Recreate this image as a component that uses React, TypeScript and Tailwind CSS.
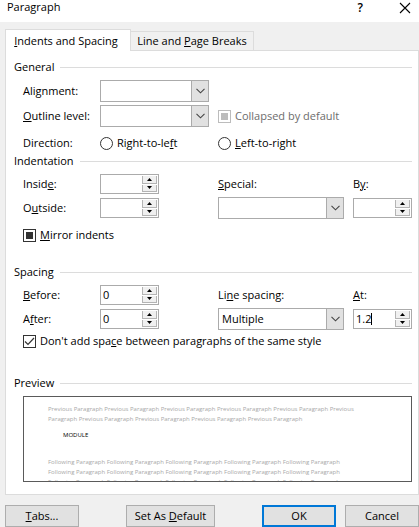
import type { ReactNode } from 'react';

function SectionHeading({ children }: { children: ReactNode }) {
  return (
    <div className="flex h-4 items-center gap-1.5 pr-1.5 pl-2">
      <h2 className="text-[11px]">{children}</h2>
      <span className="h-px flex-1 bg-[#dcdcdc]" />
    </div>
  );
}

function Combo({ id, value }: { id: string; value: string }) {
  return (
    <div className="relative h-[22px]">
      <select
        id={id}
        defaultValue={value}
        className="h-full w-full appearance-none border border-[#ababab] bg-white pr-5 pl-[3px] outline-none"
      >
        <option value={value}>{value}</option>
      </select>
      <span className="pointer-events-none absolute inset-y-0 right-0 flex w-[18px] items-center justify-center border border-[#ababab] bg-[#e1e1e1]">
        <svg width="9" height="6" viewBox="0 0 9 6" fill="none" stroke="#444" strokeWidth="1.1">
          <path d="M0.5 0.8 4.5 4.8 8.5 0.8" />
        </svg>
      </span>
    </div>
  );
}

function Spinner({ id, value = '', caret = false }: { id: string; value?: string; caret?: boolean }) {
  return (
    <div className="relative flex h-5 w-[59px] border border-[#ababab] bg-white pr-px">
      <input id={id} defaultValue={value} className="w-full min-w-0 flex-1 bg-transparent pl-0.5 outline-none" />
      {caret && <span className="absolute top-[3px] left-[17px] h-3 w-px bg-black" />}
      <div className="flex w-[15px] flex-col gap-px py-px">
        <button
          type="button"
          aria-label="Increase"
          className="flex flex-1 items-center justify-center border-x border-b border-[#b4b4b4] bg-[#f0f0f0]"
        >
          <svg width="5" height="3" viewBox="0 0 5 3">
            <path d="M2.5 0 5 3H0Z" fill="#000" />
          </svg>
        </button>
        <button
          type="button"
          aria-label="Decrease"
          className="flex flex-1 items-center justify-center border-x border-b border-[#b4b4b4] bg-[#f0f0f0]"
        >
          <svg width="5" height="3" viewBox="0 0 5 3">
            <path d="M0 0H5L2.5 3Z" fill="#000" />
          </svg>
        </button>
      </div>
    </div>
  );
}

const row = 'grid grid-cols-[77px_118px_1fr_59px] items-center pl-[17px] pr-1.5';
const tick = 'peer col-start-1 row-start-1 size-[13px] appearance-none border bg-white';
const dialogButton = 'h-[22px] border border-[#adadad] bg-[#e1e1e1] text-center';

export default function App() {
  return (
    <main className="bg-[#f0f0f0] font-['Open_Sans','Noto_Sans',sans-serif] text-[11px] leading-4 text-black">
      <header className="flex h-[22px] items-start justify-between bg-white pr-2 pl-[7px]">
        <h1 className="leading-[14px]">Paragraph</h1>
        <div className="flex gap-9">
          <button type="button" aria-label="Help" className="h-4 text-xs leading-[14px] font-semibold">
            ?
          </button>
          <button type="button" aria-label="Close">
            <svg width="12" height="12" viewBox="0 0 12 12" stroke="#000" strokeWidth="1.1">
              <path d="M1 1 11 11M11 1 1 11" />
            </svg>
          </button>
        </div>
      </header>

      <div className="pt-[7px] pl-[5px]">
        <div role="tablist" className="flex items-end">
          <button
            type="button"
            role="tab"
            aria-selected="true"
            className="z-10 -mb-px h-[22px] w-[126px] border border-b-0 border-[#dcdcdc] bg-white pr-1"
          >
            <u>I</u>ndents and Spacing
          </button>
          <button
            type="button"
            role="tab"
            aria-selected="false"
            className="h-[19px] w-[123px] border border-b-0 border-l-0 border-[#dcdcdc]"
          >
            Line and <u>P</u>age Breaks
          </button>
        </div>

        <div role="tabpanel" className="border border-[#dcdcdc] bg-white pt-2 pb-3">
          <SectionHeading>General</SectionHeading>
          <div className="mt-[5px] flex flex-col gap-[3px]">
            <div className={row}>
              <label htmlFor="alignment">
                Ali<u>g</u>nment:
              </label>
              <div className="w-[109px]">
                <Combo id="alignment" value="" />
              </div>
            </div>
            <div className={row}>
              <label htmlFor="outline">
                <u>O</u>utline level:
              </label>
              <div className="w-[109px]">
                <Combo id="outline" value="" />
              </div>
              <label className="col-span-2 flex items-center gap-1 text-[#6d6d6d]">
                <span className="grid place-items-center">
                  <input type="checkbox" disabled className={tick + ' border-[#bcbcbc]'} />
                  <span className="col-start-1 row-start-1 size-[7px] bg-[#bcbcbc]" />
                </span>
                Collapsed by default
              </label>
            </div>
          </div>
          <div className={row + ' mt-2'}>
            <span>Direction:</span>
            <label className="flex items-center gap-1">
              <input
                type="radio"
                name="direction"
                className="size-[13px] appearance-none rounded-full border border-[#333] bg-white"
              />
              <span>
                Right-to-le<u>f</u>t
              </span>
            </label>
            <label className="flex items-center gap-1">
              <input
                type="radio"
                name="direction"
                className="size-[13px] appearance-none rounded-full border border-[#333] bg-white"
              />
              <span>
                <u>L</u>eft-to-right
              </span>
            </label>
          </div>

          <div className="mt-0.5">
            <SectionHeading>Indentation</SectionHeading>
          </div>
          <div className="mt-[5px] flex flex-col gap-[3px]">
            <div className={row}>
              <label htmlFor="inside">
                Insid<u>e</u>:
              </label>
              <Spinner id="inside" />
              <label htmlFor="special">
                <u>S</u>pecial:
              </label>
              <label htmlFor="by">
                B<u>y</u>:
              </label>
            </div>
            <div className={row}>
              <label htmlFor="outside">
                O<u>u</u>tside:
              </label>
              <Spinner id="outside" />
              <div className="pr-[9px]">
                <Combo id="special" value="" />
              </div>
              <Spinner id="by" />
            </div>
          </div>
          <label className="mt-2 flex items-center gap-1 pl-[17px]">
            <span className="grid place-items-center">
              <input type="checkbox" className={tick + ' border-[#333]'} />
              <span className="col-start-1 row-start-1 size-[7px] bg-[#333]" />
            </span>
            <span>
              <u>M</u>irror indents
            </span>
          </label>

          <div className="mt-[21px]">
            <SectionHeading>Spacing</SectionHeading>
          </div>
          <div className="mt-[5px] flex flex-col gap-[3px]">
            <div className={row}>
              <label htmlFor="before">
                <u>B</u>efore:
              </label>
              <Spinner id="before" value="0" />
              <label htmlFor="line-spacing">
                Li<u>n</u>e spacing:
              </label>
              <label htmlFor="at">
                <u>A</u>t:
              </label>
            </div>
            <div className={row}>
              <label htmlFor="after">
                A<u>f</u>ter:
              </label>
              <Spinner id="after" value="0" />
              <div className="pr-[9px]">
                <Combo id="line-spacing" value="Multiple" />
              </div>
              <Spinner id="at" value="1.2" caret />
            </div>
          </div>
          <label className="mt-[3px] flex items-center gap-1 pl-[17px]">
            <span className="grid place-items-center">
              <input type="checkbox" defaultChecked className={tick + ' border-[#333]'} />
              <svg
                className="pointer-events-none col-start-1 row-start-1 hidden peer-checked:block"
                width="11"
                height="9"
                viewBox="0 0 11 9"
                fill="none"
                stroke="#333"
                strokeWidth="1.2"
              >
                <path d="M1 4.5 4 7.5 10 1" />
              </svg>
            </span>
            <span>
              Don't add spa<u>c</u>e between paragraphs of the same style
            </span>
          </label>

          <div className="mt-[26px]">
            <SectionHeading>Preview</SectionHeading>
          </div>
          <div className="mt-[5px] mr-1.5 ml-[17px] h-[86px] overflow-hidden border border-[#5a5a5a] pt-[7px] pl-6 text-[6px] leading-[10px] whitespace-nowrap text-[#a8a8a8]">
            <p>
              Previous Paragraph Previous Paragraph Previous Paragraph Previous Paragraph Previous Paragraph Previous
            </p>
            <p>Paragraph Previous Paragraph Previous Paragraph Previous Paragraph Previous Paragraph</p>
            <p className="mt-[6px] mb-[17px] pl-[15px] text-black">MODULE</p>
            <p>Following Paragraph Following Paragraph Following Paragraph Following Paragraph Following Paragraph</p>
            <p>Following Paragraph Following Paragraph Following Paragraph Following Paragraph Following Paragraph</p>
            <p>Following Paragraph Following Paragraph Following Paragraph Following Paragraph Following Paragraph</p>
          </div>
        </div>

        <footer className="flex justify-between pt-[10px]">
          <div className="flex gap-[47px]">
            <button type="button" className={dialogButton + ' w-[74px]'}>
              <u>T</u>abs...
            </button>
            <button type="button" className={dialogButton + ' w-[89px]'}>
              Set As <u>D</u>efault
            </button>
          </div>
          <div className="flex gap-[9px]">
            <button type="button" className="h-[22px] w-[74px] border-2 border-[#0078d7] bg-[#e1e1e1] text-center">
              OK
            </button>
            <button type="button" className={dialogButton + ' w-[74px]'}>
              Cancel
            </button>
          </div>
        </footer>
      </div>
    </main>
  );
}
